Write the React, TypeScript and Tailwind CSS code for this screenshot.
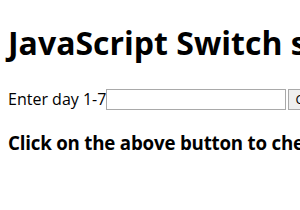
export default function App() {
  return (
    <div className="w-[300px] h-[210px] overflow-hidden bg-white px-2 text-black whitespace-nowrap font-['Open_Sans',sans-serif]">
      <h1 className="pt-[21px] text-[32px] font-bold leading-[43px]">JavaScript Switch statement</h1>
      <div className="mt-[25px] flex items-center text-[16px] leading-[21px]">
        <span>Enter day 1-7</span>
        <input className="h-[21px] w-[180px] shrink-0 border border-[#a9a9a9] bg-white px-0.5 text-[13px]" />
        <button className="ml-0.5 h-[21px] shrink-0 border border-[#a9a9a9] bg-[#efefef] px-1.5 text-[13px] leading-none">Check</button>
      </div>
      <h3 className="mt-[20px] text-[18.72px] font-bold leading-[25px] tracking-[-0.2px]">Click on the above button to check the day</h3>
    </div>
  );
}
